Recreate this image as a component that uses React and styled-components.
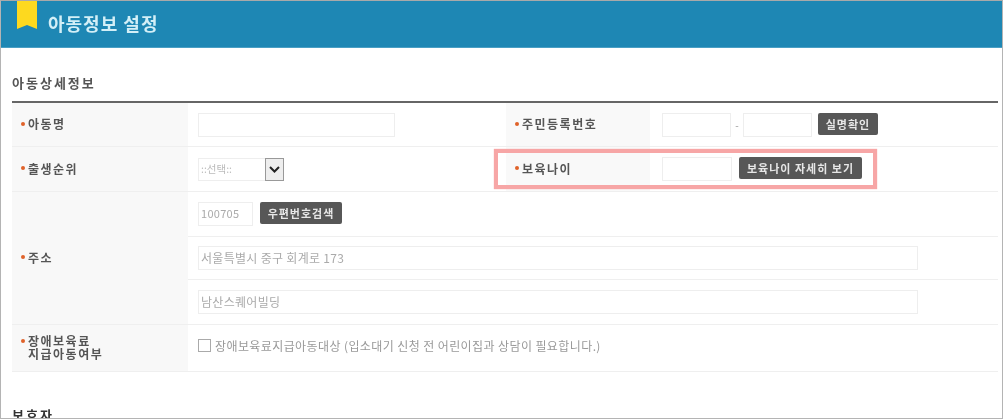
import styled, { createGlobalStyle } from "styled-components";

const GlobalStyle = createGlobalStyle`
  html, body {
    margin: 0;
    padding: 0;
    background: #fff;
  }
  * {
    box-sizing: border-box;
  }
`;

const Page = styled.div`
  width: 1003px;
  height: 419px;
  overflow: hidden;
  border: 1px solid #b4b4b4;
  border-top-color: #a9a9a9;
  background: #fff;
  font-family: "Noto Sans CJK KR", "Noto Sans", sans-serif;
  filter: blur(0.5px);
`;

const Header = styled.div`
  height: 47px;
  background: #1e87b4;
  border-bottom: 1px solid #4a9fc4;
  display: flex;
  align-items: flex-start;
  padding-left: 16px;
`;

const Bookmark = styled.svg`
  width: 20px;
  height: 28px;
  flex: none;
`;

const HeaderTitle = styled.h1`
  margin: 9px 0 0 11px;
  font-size: 18px;
  line-height: 26px;
  font-weight: 700;
  letter-spacing: 1px;
  color: #d3eff7;
`;

const Content = styled.div`
  padding: 0 4px 0 11px;
`;

const SectionTitle = styled.h2`
  margin: 25px 0 0;
  height: 28px;
  font-size: 13px;
  line-height: 20px;
  font-weight: 700;
  letter-spacing: 2px;
  color: #555;
`;

const Table = styled.div`
  border-top: 2px solid #666;
`;

const Row = styled.div`
  display: flex;
  height: ${(p) => p.$height}px;
  border-bottom: 1px solid #efefef;
`;

const Label = styled.div`
  width: 176px;
  flex: none;
  display: flex;
  align-items: center;
  padding: 0 0 2px 9px;
  background: #f8f8f8;
  font-size: 12px;
  line-height: 13px;
  font-weight: 700;
  letter-spacing: 1.5px;
  color: #555;
`;

const Dot = styled.span`
  width: 4px;
  height: 4px;
  margin-right: 3px;
  margin-bottom: ${(p) => (p.$firstLine ? "13px" : "0")};
  border-radius: 50%;
  background: #e0622a;
  flex: none;
`;

const Field = styled.div`
  display: flex;
  align-items: center;
  padding-left: ${(p) => p.$inset || 10}px;
  padding-bottom: ${(p) => p.$raise || 0}px;
  width: ${(p) => p.$width || "auto"};
  flex: ${(p) => (p.$width ? "none" : "1")};
`;

const SideCell = styled.div`
  position: relative;
  display: flex;
  flex: 1;
`;

const SideLabel = styled(Label)`
  width: 144px;
  margin-left: 6px;
  padding-left: 9px;
  background: #f9f9f9;
`;

const Highlight = styled.div`
  position: absolute;
  left: -6px;
  top: 2px;
  width: 383px;
  height: 40px;
  border: 4px solid #f7a6a6;
  box-shadow: 0 0 1px #f7a6a6;
  pointer-events: none;
`;

const Input = styled.input`
  display: block;
  width: ${(p) => p.$width}px;
  height: 24px;
  padding: 0 2px 2px;
  border: 1px solid #eee;
  outline: none;
  background: #fff;
  font-family: inherit;
  font-size: ${(p) => p.$size || 12}px;
  letter-spacing: 0.3px;
  color: #aaa;
`;

const Dash = styled.span`
  width: 12px;
  text-align: center;
  font-size: 10px;
  color: #999;
`;

const DarkButton = styled.button`
  height: 22px;
  margin-left: ${(p) => p.$gap}px;
  margin-bottom: 2px;
  padding: 0;
  width: ${(p) => p.$width}px;
  border: none;
  border-radius: 2px;
  background: #575757;
  font-family: inherit;
  font-size: 11px;
  font-weight: 700;
  letter-spacing: 1px;
  color: #e6e6e6;
`;

const SelectBox = styled.div`
  display: flex;
  width: 86px;
  height: 23px;
  border: 1px solid #eee;
`;

const SelectText = styled.span`
  flex: 1;
  padding-left: 2px;
  font-size: 10.5px;
  line-height: 20px;
  color: #bbb;
`;

const SelectArrow = styled.span`
  width: 19px;
  display: flex;
  align-items: center;
  justify-content: center;
  background: #eee;
  border: 1px solid #999;
  margin: -1px;
`;

const AddressLines = styled.div`
  flex: 1;
  display: flex;
  flex-direction: column;
`;

const AddressLine = styled.div`
  display: flex;
  align-items: center;
  padding-left: 10px;
  height: ${(p) => p.$height}px;
  border-bottom: ${(p) => (p.$last ? "none" : "1px solid #efefef")};
`;

const CheckBox = styled.span`
  width: 13px;
  height: 13px;
  flex: none;
  border: 1px solid #aaa;
  background: #fff;
`;

const CheckText = styled.span`
  margin-left: 4px;
  font-size: 12px;
  color: #999;
  letter-spacing: 0.4px;
  white-space: nowrap;
`;

const NextSection = styled(SectionTitle)`
  margin-top: 33px;
  color: #333;
`;

const App = () => (
  <>
    <GlobalStyle />
    <Page>
      <Header>
        <Bookmark viewBox="0 0 20 28">
          <path d="M0 0H20V28L10 24L0 28Z" fill="#fdd91f" />
        </Bookmark>
        <HeaderTitle>아동정보 설정</HeaderTitle>
      </Header>
      <Content>
        <SectionTitle>아동상세정보</SectionTitle>
        <Table>
          <Row $height={44}>
            <Label>
              <Dot />
              아동명
            </Label>
            <Field $width="312px">
              <Input $width={197} />
            </Field>
            <SideCell>
              <SideLabel>
                <Dot />
                주민등록번호
              </SideLabel>
              <Field $inset={12}>
                <Input $width={69} />
                <Dash>-</Dash>
                <Input $width={69} />
                <DarkButton $gap={6} $width={60}>
                  실명확인
                </DarkButton>
              </Field>
            </SideCell>
          </Row>
          <Row $height={45}>
            <Label>
              <Dot />
              출생순위
            </Label>
            <Field $width="312px">
              <SelectBox>
                <SelectText>::선택::</SelectText>
                <SelectArrow>
                  <svg width="11" height="7" viewBox="0 0 11 7">
                    <path d="M1 1L5.5 5.5L10 1" fill="none" stroke="#222" strokeWidth="2" />
                  </svg>
                </SelectArrow>
              </SelectBox>
            </Field>
            <SideCell>
              <SideLabel>
                <Dot />
                보육나이
              </SideLabel>
              <Field $inset={12}>
                <Input $width={70} />
                <DarkButton $gap={7} $width={123}>
                  보육나이 자세히 보기
                </DarkButton>
              </Field>
              <Highlight />
            </SideCell>
          </Row>
          <Row $height={133}>
            <Label>
              <Dot />
              주소
            </Label>
            <AddressLines>
              <AddressLine $height={45}>
                <Input $width={55} $size={11} defaultValue="100705" />
                <DarkButton $gap={7} $width={82}>
                  우편번호검색
                </DarkButton>
              </AddressLine>
              <AddressLine $height={44}>
                <Input $width={720} defaultValue="서울특별시 중구 회계로 173" />
              </AddressLine>
              <AddressLine $height={44} $last>
                <Input $width={720} defaultValue="남산스퀘어빌딩" />
              </AddressLine>
            </AddressLines>
          </Row>
          <Row $height={47}>
            <Label>
              <Dot $firstLine />
              <span>
                장애보육료
                <br />
                지급아동여부
              </span>
            </Label>
            <Field $raise={5}>
              <CheckBox />
              <CheckText>
                장애보육료지급아동대상 (입소대기 신청 전 어린이집과 상담이 필요합니다.)
              </CheckText>
            </Field>
          </Row>
        </Table>
        <NextSection>보호자</NextSection>
      </Content>
    </Page>
  </>
);

export default App;
